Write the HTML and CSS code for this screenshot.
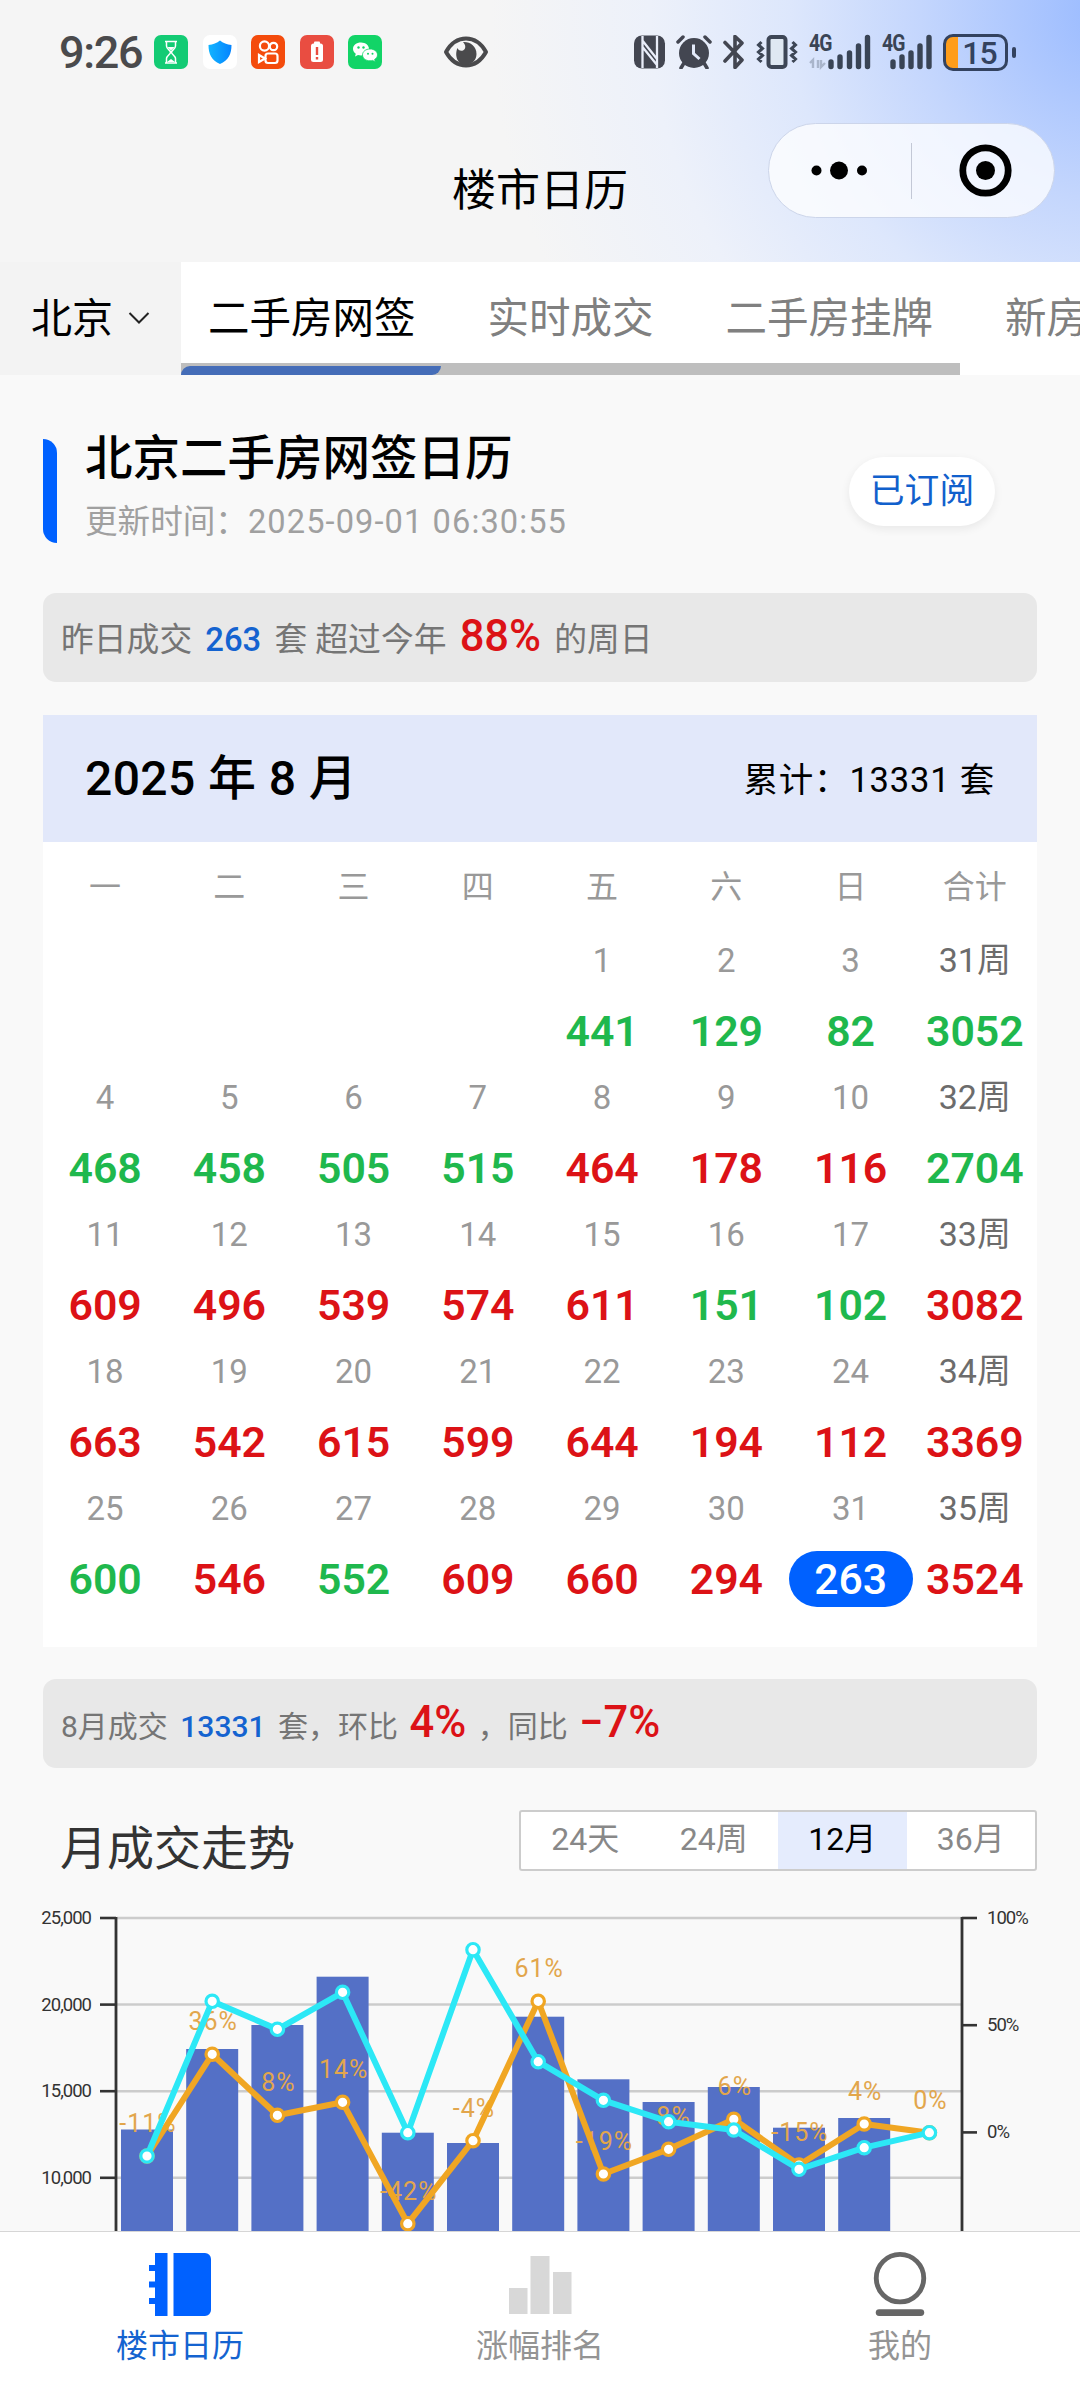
FILE: index.html
```html
<!DOCTYPE html>
<html lang="zh-CN">
<head>
	<meta charset="utf-8">
	<title>楼市日历</title>
	<link rel="stylesheet" href="styles.css">
</head>
<body>
	<header class="header">
		<div class="status">
			<span class="time">9:26</span>
			<div class="apps">
				<svg width="34" height="34" viewBox="0 0 34 34"><rect width="34" height="34" rx="7" fill="#13cb74"/><path d="M11 6.500h12M11 28h12M12.500 7v4c0 3 4 4 4 6.300s-4 3.300-4 6.300V28M21.500 7v4c0 3-4 4-4 6.300s4 3.300 4 6.300V28" fill="none" stroke="#fff" stroke-width="1.500"/><path d="M13.500 12h7L17 15.500zM13 27l4-3 4 3z" fill="#fff"/></svg>
				<svg width="34" height="34" viewBox="0 0 34 34"><defs><linearGradient id="sh"><stop stop-color="#12b4ff"/><stop offset="1" stop-color="#0584ff"/></linearGradient></defs><rect width="34" height="34" rx="7" fill="#fff"/><path d="M17 5.500c3 2.500 7 4 11.500 4.500 0 9-3 15.500-11.500 19C8.500 25.500 5.500 19 5.500 10 10 9.500 14 8 17 5.500z" fill="url(#sh)"/></svg>
				<svg width="34" height="34" viewBox="0 0 34 34"><rect width="34" height="34" rx="7" fill="#f44b0c"/><g fill="none" stroke="#fff" stroke-width="2.200"><circle cx="13.500" cy="11" r="4.600"/><circle cx="22.500" cy="11.500" r="3.700"/><rect x="14.500" y="18.500" width="12" height="9.500" rx="2.500"/><path d="M14 23.500l-6-3.500v7z"/></g></svg>
				<svg width="34" height="34" viewBox="0 0 34 34"><rect width="34" height="34" rx="7" fill="#e94d41"/><rect x="14" y="6.500" width="6" height="4" rx="1" fill="#fff"/><rect x="11" y="8.500" width="12" height="18.500" rx="2.500" fill="#fff"/><path d="M17 12v8M17 22v2.500" stroke="#e94d41" stroke-width="2.400"/></svg>
				<svg width="34" height="34" viewBox="0 0 34 34"><rect width="34" height="34" rx="7" fill="#12d467"/><path d="M13 7.500c-4.500 0-8 2.700-8 6.300 0 2 1 3.700 2.800 4.900L7 21.500l3-1.500c1 .3 2 .400 3 .400 4.500 0 8-2.900 8-6.500s-3.500-6.400-8-6.400z" fill="#fff"/><path d="M22 14c-4.200 0-7.500 2.500-7.500 5.900s3.300 5.900 7.500 5.900c.9 0 1.800-.1 2.600-.4l2.700 1.400-.7-2.400c1.800-1.100 2.900-2.700 2.900-4.500 0-3.400-3.300-5.900-7.500-5.900z" fill="#fff" stroke="#12d467" stroke-width=".8"/><g fill="#12d467"><circle cx="10.500" cy="12.500" r="1.200"/><circle cx="15.500" cy="12.500" r="1.200"/><circle cx="20" cy="18.700" r="1"/><circle cx="24.500" cy="18.700" r="1"/></g></svg>
			</div>
			<svg class="eye" width="46" height="34" viewBox="0 0 46 34"><path d="M3 17C8 8 15 3.500 23 3.500S38 8 43 17C38 26 31 30.500 23 30.500S8 26 3 17z" fill="none" stroke="#4a4a4c" stroke-width="4" stroke-linejoin="round"/><path d="M20 7c3 3 3 7 0 8.500-2.500 1-5-.5-5.500-2.500-2.500 5-2 16.500 8.500 16.500 6 0 10.500-4.500 10.500-10.500C33.500 11 27 6.500 20 7z" fill="#4a4a4c"/></svg>
			<div class="system">
				<svg width="32" height="34" viewBox="0 0 32 34"><rect y=".5" width="31" height="33" rx="8" fill="#434651"/><path d="M8.500 1v32M8 5l15 19M23 33V1M8.500 12L23 30" stroke="#e9edf9" stroke-width="2.300" fill="none"/></svg>
				<svg class="i-alarm" width="36" height="34" viewBox="0 0 36 34"><circle cx="18" cy="18" r="15" fill="#434651"/><path d="M2 7l5-5M34 7l-5-5M8 28l-3 5M28 28l3 5" stroke="#434651" stroke-width="3.500" stroke-linecap="round"/><path d="M17.500 9.500v9l6 5.500" fill="none" stroke="#e3eafa" stroke-width="3"/></svg>
				<svg class="i-bt" width="22" height="34" viewBox="0 0 22 34"><path d="M2 7.500L19 25l-7 7.500v-31L19 8 2 26" fill="none" stroke="#434651" stroke-width="3.600" stroke-linejoin="round" stroke-linecap="round"/></svg>
				<svg class="i-vib" width="42" height="34" viewBox="0 0 42 34"><rect x="12.500" y="2" width="17" height="30" rx="3" fill="#dfe8f2" stroke="#3d4656" stroke-width="4"/><path d="M5.500 7l-3 3 4 3.500-4 3.500 4 3.500-4 3.500 3 3M36.500 7l3 3-4 3.500 4 3.500-4 3.500 4 3.500-3 3" fill="none" stroke="#3d4656" stroke-width="3"/></svg>
				<div class="signal">
					<span>4G</span>
					<svg width="62" height="36" viewBox="0 0 62 36"><path d="M23.500 28v4.500M32.500 23v9.500M42 19v13.500M51 12v20.500M60 3.500v29" stroke="#394455" stroke-width="5.400" stroke-linecap="round" transform="translate(-1.500)"/><path d="M4 34v-8l-3 3M9 34v-8M12 26v7l4-4" fill="none" stroke="#a9b5cb" stroke-width="2.400"/></svg>
				</div>
				<div class="signal signal-b">
					<span>4G</span>
					<svg width="51" height="36" viewBox="0 0 51 36"><path d="M11 28v4.500M20 23v9.500M29 19v13.500M38 12v20.500M47 3.500v29" stroke="#394455" stroke-width="5.400" stroke-linecap="round"/></svg>
				</div>
				<div class="battery"><span>15</span></div>
				<i class="nub"></i>
			</div>
		</div>
		<div class="nav">
			<h1>楼市日历</h1>
			<div class="capsule">
				<svg width="142" height="94" viewBox="0 0 142 94"><circle cx="47.500" cy="46.500" r="5"/><circle cx="70" cy="46.500" r="9"/><circle cx="93" cy="46.500" r="5"/></svg>
				<i></i>
				<svg width="142" height="94" viewBox="0 0 142 94"><circle cx="73.500" cy="46.500" r="22.700" fill="none" stroke="#000" stroke-width="6.800"/><circle cx="73.500" cy="46.500" r="9.500"/></svg>
			</div>
		</div>
	</header>

	<div class="tabs">
		<div class="city">北京<svg width="22" height="14" viewBox="0 0 22 14"><path d="M1.500 2l9.500 9.500L20.500 2" fill="none" stroke="#222" stroke-width="2"/></svg></div>
		<div class="tab-scroll">
			<div class="tab-list">
				<span class="active">二手房网签</span>
				<span>实时成交</span>
				<span>二手房挂牌</span>
				<span>新房</span>
			</div>
			<div class="track"><i></i></div>
		</div>
	</div>

	<main class="content">
		<section class="heading">
			<i class="mark"></i>
			<div class="heading-text">
				<h2>北京二手房网签日历</h2>
				<p>更新时间：<span>2025-09-01 06:30:55</span></p>
			</div>
			<button class="subscribe">已订阅</button>
		</section>

		<p class="notice">昨日成交 <b class="blue">263</b> 套 超过今年 <b class="up">88%</b> 的周日</p>

		<section class="calendar">
			<div class="calendar-head">
				<h2>2025 年 8 月</h2>
				<span>累计：13331 套</span>
			</div>
			<div class="weekdays">
				<span>一</span><span>二</span><span>三</span><span>四</span><span>五</span><span>六</span><span>日</span><span>合计</span>
			</div>
			<div class="days" id="days"></div>
		</section>

		<p class="notice notice-month">8月成交 <b class="blue">13331</b> 套，环比 <b class="up">4%</b> ，同比 <b class="up">−7%</b></p>

		<section class="trend">
			<div class="trend-head">
				<h3>月成交走势</h3>
				<div class="segment">
					<span>24天</span><span>24周</span><span class="on">12月</span><span>36月</span>
				</div>
			</div>
			<svg id="chart" class="chart" width="1080" height="341" viewBox="0 1890 1080 341"></svg>
		</section>
	</main>

	<footer class="tabbar">
		<div class="item current">
			<svg width="64" height="64" viewBox="0 0 64 64"><path d="M7 1h12.500v63H7V52H1v-6h6V35.500H1v-6h6V19H1v-6h6zM25.500 1H57a6 6 0 0 1 6 6v51a6 6 0 0 1-6 6H25.500z" fill="#0061ff"/></svg>
			<span>楼市日历</span>
		</div>
		<div class="item">
			<svg width="64" height="64" viewBox="0 0 64 64"><path d="M1 36h18.500v26H1zM22.500 4h19v58h-19zM45 20h18.500v42H45z" fill="#d8d8d8"/></svg>
			<span>涨幅排名</span>
		</div>
		<div class="item">
			<svg width="64" height="66" viewBox="0 0 64 66"><circle cx="32" cy="27" r="24.500" fill="none" stroke="#666" stroke-width="5"/><path d="M10.500 62.500h43" stroke="#666" stroke-width="7" stroke-linecap="round"/></svg>
			<span>我的</span>
		</div>
	</footer>

	<script src="script.js"></script>
</body>
</html>
```

FILE: styles.css
```css
* {
	box-sizing: border-box;
}

body {
	margin: 0;
	width: 1080px;
	height: 2382px;
	overflow: hidden;
	display: flex;
	flex-direction: column;
	background: #f9f9f9;
	font-family: Roboto, "Noto Sans CJK SC", sans-serif;
	color: #000;
}

h1, h2, h3, p {
	margin: 0;
	font-weight: 400;
}

svg {
	display: block;
	flex: none;
}

/* header */
.header {
	flex: none;
	height: 262px;
	background: radial-gradient(circle at 1110px 10px, #99baff 0, #c4d6fd 190px, #dde7fc 320px, #edf1fa 460px, #f5f5f5 620px);
}

.status {
	display: flex;
	align-items: center;
	height: 104px;
	padding-left: 59px;
}

.time {
	width: 95px;
	font-size: 45px;
	font-weight: 500;
	letter-spacing: -1.300px;
	color: #4a4a4c;
}

.apps {
	display: flex;
	gap: 14.600px;
}

.eye {
	margin-left: 61px;
}

.system {
	display: flex;
	align-items: center;
	margin-left: 145px;
}

.i-alarm {
	margin-left: 10px;
}

.i-bt {
	margin-left: 11px;
}

.i-vib {
	margin-left: 11px;
}

.signal {
	position: relative;
	margin-left: 11px;
}

.signal-b {
	margin-left: 11px;
}

.signal span {
	position: absolute;
	left: 0;
	top: 0;
	font-size: 22px;
	line-height: 18px;
	font-weight: 700;
	letter-spacing: -1px;
	color: #394455;
	transform: scale(.88, 1.08);
	transform-origin: 0 0;
}

.battery {
	width: 65px;
	height: 37px;
	margin-left: 10px;
	border: 3px solid #33425f;
	border-radius: 10px;
	background: linear-gradient(90deg, #ff9d1b 12px, transparent 12px);
	text-align: center;
	padding-left: 7px;
}

.battery span {
	display: block;
	font-size: 32px;
	line-height: 32px;
	font-weight: 500;
	letter-spacing: -1px;
	color: #33425f;
}

.nub {
	width: 4px;
	height: 11px;
	margin-left: 4px;
	border-radius: 2px;
	background: #33425f;
}

.nav {
	display: flex;
	justify-content: flex-end;
	align-items: flex-start;
	padding: 19px 25px 0 0;
}

.nav h1 {
	width: 316px;
	margin-top: 36px;
	font-size: 44px;
	line-height: 64px;
}

.capsule {
	display: flex;
	align-items: center;
	width: 287px;
	height: 95px;
	border: 1px solid #ccd5ea;
	border-radius: 48px;
	background: rgba(255, 255, 255, .75);
}

.capsule i {
	width: 1px;
	height: 56px;
	background: #c3c8d6;
}

/* tabs */
.tabs {
	flex: none;
	display: flex;
	height: 113px;
	background: #fff;
}

.city {
	display: flex;
	align-items: center;
	width: 181px;
	padding: 0 0 7px 31px;
	background: #f3f3f3;
	font-size: 41px;
}

.city svg {
	margin: 5px 0 0 15px;
}

.tab-scroll {
	width: 899px;
	overflow: hidden;
}

.tab-list {
	display: flex;
	gap: 72px;
	height: 101px;
	padding-left: 27px;
	font-size: 41.500px;
	line-height: 113px;
	white-space: nowrap;
	color: #808080;
}

.tab-list .active {
	color: #000;
}

.track {
	width: 779px;
	height: 12px;
	padding-top: 3px;
	background: #bebebe;
}

.track i {
	display: block;
	width: 260px;
	height: 9px;
	border-radius: 9px 0;
	background: #456db8;
}

/* content */
.content {
	flex: 1;
	min-height: 0;
	overflow: hidden;
	padding: 0 43px;
}

.heading {
	display: flex;
	align-items: center;
	height: 218px;
	padding: 10px 42px 0 0;
}

.mark {
	width: 14px;
	height: 104px;
	margin-top: 4px;
	border-radius: 0 14px;
	background: #0061ff;
}

.heading-text {
	flex: 1;
	padding-left: 28px;
}

.heading-text h2 {
	font-size: 47.500px;
	line-height: 66px;
	font-weight: 500;
}

.heading-text p {
	font-size: 32.600px;
	line-height: 60px;
	color: #a0a0a0;
}

.heading-text p span {
	letter-spacing: 1.100px;
}

.subscribe {
	width: 146px;
	height: 69px;
	margin-top: 4px;
	padding: 0 0 7px;
	border: 0;
	border-radius: 35px;
	background: #fff;
	box-shadow: 0 3px 10px rgba(0, 0, 0, .07);
	font: inherit;
	font-size: 34.800px;
	color: #1160cc;
}

.notice {
	height: 89px;
	padding-left: 18px;
	border-radius: 13px;
	background: #e8e8e8;
	font-size: 32.800px;
	line-height: 88px;
	white-space: pre;
	color: #757575;
}

.notice b {
	font-weight: 500;
}

.notice .blue {
	padding: 0 5px;
	color: #1463d0;
}

.notice .up {
	padding: 0 5px;
	font-size: 43.500px;
	color: #dc1216;
}

.notice-month {
	font-size: 30px;
	line-height: 87px;
}

.notice-month .up {
	padding: 0 4px;
}

.calendar {
	margin: 33px 0 32px;
	padding-bottom: 30px;
	background: #fff;
}

.calendar-head {
	display: flex;
	justify-content: space-between;
	align-items: center;
	height: 127px;
	padding: 0 42px 4px;
	background: #e2e8fa;
	font-size: 34.500px;
	letter-spacing: .8px;
}

.calendar-head h2 {
	margin-top: -6px;
	font-size: 48px;
	font-weight: 500;
	letter-spacing: .4px;
}

.weekdays,
.week {
	display: grid;
	grid-template-columns: repeat(8, 1fr);
	text-align: center;
}

.weekdays {
	font-size: 32px;
	line-height: 90px;
	color: #999;
}

.day {
	height: 137px;
	color: #999;
	font-size: 33px;
	line-height: 57px;
}

.day b {
	display: block;
	height: 56px;
	margin-top: 14px;
	border-radius: 28px;
	font-size: 42.800px;
	line-height: 56px;
	font-weight: 600;
}

.day.total {
	font-size: 34px;
	color: #6c6c6c;
}

.day .g {
	color: #1fb84d;
}

.day .r {
	color: #dc1216;
}

.day .today {
	background: #0061ff;
	color: #fff;
	font-weight: 500;
}

/* trend */
.trend-head {
	display: flex;
	justify-content: space-between;
	align-items: flex-start;
	height: 122px;
	padding: 42px 0 0 17px;
}

.trend-head h3 {
	font-size: 47px;
	line-height: 78px;
	color: #333;
}

.segment {
	display: flex;
	width: 518px;
	height: 61px;
	border: 2px solid #ccc;
	border-radius: 3px;
	background: #fff;
	font-size: 32px;
	line-height: 54px;
	text-align: center;
	color: #888;
}

.segment span {
	flex: 1;
}

.segment .on {
	background: #e5ecfd;
	color: #000;
}

.chart {
	margin-left: -43px;
}

.axis-text {
	font-size: 18.500px;
	letter-spacing: -1px;
	fill: #333;
}

.rate-text {
	font-size: 25px;
	letter-spacing: 1px;
	text-anchor: middle;
	fill: #e2a64c;
}

/* bottom bar */
.tabbar {
	flex: none;
	display: flex;
	height: 151px;
	border-top: 1px solid #d6d6d6;
	background: #fff;
}

.item {
	flex: 1;
	display: flex;
	flex-direction: column;
	align-items: center;
	padding-top: 20px;
	font-size: 32px;
	line-height: 60px;
	color: #949494;
}

.item svg {
	height: 64px;
	overflow: visible;
}

.item.current {
	color: #1463d0;
}
```

FILE: script.js
```js
// number of deals per day, g = down, r = up
var weeks = [
	[31, null, null, null, null, 'g441', 'g129', 'g82', 'g3052'],
	[32, 'g468', 'g458', 'g505', 'g515', 'r464', 'r178', 'r116', 'g2704'],
	[33, 'r609', 'r496', 'r539', 'r574', 'r611', 'g151', 'g102', 'r3082'],
	[34, 'r663', 'r542', 'r615', 'r599', 'r644', 'r194', 'r112', 'r3369'],
	[35, 'g600', 'r546', 'g552', 'r609', 'r660', 'r294', 't263', 'r3524']
];
var classes = { g: 'g', r: 'r', t: 'today' };
var date = 1;

document.getElementById('days').innerHTML = weeks.map(function(week) {
	var cells = week.slice(1).map(function(v, i) {
		if (!v) return '<div class="day"></div>';
		var total = i === 7;
		return '<div class="day' + (total ? ' total' : '') + '">' +
			(total ? week[0] + '周' : date++) +
			'<b class="' + classes[v[0]] + '">' + v.slice(1) + '</b></div>';
	});
	return '<div class="week">' + cells.join('') + '</div>';
}).join('');

// trend chart
var bars = [2129.5, 2049, 2025, 1976.7, 2132.7, 2143, 2016.7, 2079.3, 2102, 2087, 2127.7, 2118];
var month = [2156, 2054.3, 2115.3, 2102.3, 2223.7, 2140.7, 2001.3, 2174, 2149.3, 2119.3, 2165, 2124, 2132.7];
var year = [2156, 2001.3, 2029.3, 1992.3, 2132.7, 1949.7, 2061.7, 2100.3, 2121.7, 2130, 2169.3, 2147.7, 2132.7];
var labels = ['-11%', '36%', '8%', '14%', '-42%', '-4%', '61%', '-19%', '-8%', '6%', '-15%', '4%', '0%'];
var svg = '';

function x(i) {
	return 147 + i * 65.2;
}

function line(values, color) {
	var points = values.map(function(y, i) { return x(i) + ',' + y; }).join(' ');
	svg += '<polyline points="' + points + '" fill="none" stroke="' + color + '" stroke-width="6" stroke-linejoin="round"/>';
	values.forEach(function(y, i) {
		svg += '<circle cx="' + x(i) + '" cy="' + y + '" r="6.2" fill="#fff" stroke="' + color + '" stroke-width="3.2"/>';
	});
}

['25,000', '20,000', '15,000', '10,000'].forEach(function(text, i) {
	var y = 1918 + i * 86.6;
	svg += '<path d="M117 ' + y + 'H962" stroke="#ccc" stroke-width="2.500"/>' +
		'<path d="M100 ' + y + 'h16" stroke="#333" stroke-width="2.600"/>' +
		'<text class="axis-text" text-anchor="end" x="91" y="' + (y + 6) + '">' + text + '</text>';
});

bars.forEach(function(y, i) {
	svg += '<rect x="' + (x(i) - 26) + '" y="' + y + '" width="52" height="' + (2240 - y) + '" fill="#5470c6"/>';
});

svg += '<path d="M116 1917V2240M962 1917V2240" stroke="#333" stroke-width="2.800"/>';

['100%', '50%', '0%'].forEach(function(text, i) {
	var y = 1918 + i * 107.2;
	svg += '<path d="M962 ' + y + 'h15" stroke="#333" stroke-width="2.600"/>' +
		'<text class="axis-text" x="987" y="' + (y + 6) + '">' + text + '</text>';
});

labels.forEach(function(text, i) {
	svg += '<text class="rate-text" x="' + (x(i) + 1) + '" y="' + (month[i] - 24) + '">' + text + '</text>';
});

line(month, '#f0a623');
line(year, '#2ce8f6');

document.getElementById('chart').innerHTML = svg;
```
